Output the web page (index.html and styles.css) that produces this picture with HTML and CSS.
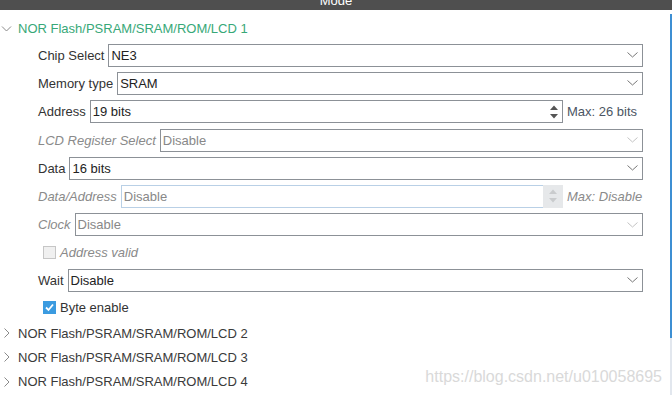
FILE: index.html
```html
<!DOCTYPE html>
<html lang="en">
<head>
  <meta charset="UTF-8">
  <meta name="viewport" content="width=device-width, initial-scale=1.0">
  <title>Mode</title>
  <link rel="stylesheet" href="styles.css">
</head>
<body>
  <header class="mode-bar"><span>Mode</span></header>

  <div class="panel">
    <div class="tree">
      <!-- expanded bank -->
      <div class="group open">
        <div class="group-head">
          <svg class="twisty down" width="12" height="8" viewBox="0 0 12 8"><path d="M1 1.5 L5.5 6 L10 1.5" fill="none" stroke="#8a8a8a" stroke-width="1"/></svg>
          <span class="group-title">NOR Flash/PSRAM/SRAM/ROM/LCD 1</span>
        </div>

        <div class="group-body">
          <div class="field">
            <label>Chip Select</label>
            <div class="box">
              <span>NE3</span>
              <svg class="caret" width="11" height="6" viewBox="0 0 11 6"><path d="M0.5 0.5 L5.5 5 L10.5 0.5" fill="none" stroke="#777" stroke-width="1"/></svg>
            </div>
          </div>

          <div class="field">
            <label>Memory type</label>
            <div class="box">
              <span>SRAM</span>
              <svg class="caret" width="11" height="6" viewBox="0 0 11 6"><path d="M0.5 0.5 L5.5 5 L10.5 0.5" fill="none" stroke="#777" stroke-width="1"/></svg>
            </div>
          </div>

          <div class="field tall">
            <label>Address</label>
            <div class="box spin">
              <span>19 bits</span>
              <div class="spin-btn">
                <svg width="10" height="16" viewBox="0 0 10 16"><path d="M1 6 L5 1.5 L9 6 Z M1 10 L5 14.5 L9 10 Z" fill="#555"/></svg>
              </div>
            </div>
            <span class="max">Max: 26 bits</span>
          </div>

          <div class="field disabled">
            <label>LCD Register Select</label>
            <div class="box">
              <span>Disable</span>
              <svg class="caret" width="11" height="6" viewBox="0 0 11 6"><path d="M0.5 0.5 L5.5 5 L10.5 0.5" fill="none" stroke="#c4c4c4" stroke-width="1"/></svg>
            </div>
          </div>

          <div class="field">
            <label>Data</label>
            <div class="box">
              <span>16 bits</span>
              <svg class="caret" width="11" height="6" viewBox="0 0 11 6"><path d="M0.5 0.5 L5.5 5 L10.5 0.5" fill="none" stroke="#777" stroke-width="1"/></svg>
            </div>
          </div>

          <div class="field disabled">
            <label>Data/Address</label>
            <div class="box spin off">
              <span>Disable</span>
              <div class="spin-btn">
                <svg width="10" height="16" viewBox="0 0 10 16"><path d="M1 6 L5 1.5 L9 6 Z M1 10 L5 14.5 L9 10 Z" fill="#c9cbcd"/></svg>
              </div>
            </div>
            <span class="max">Max: Disable</span>
          </div>

          <div class="field disabled tall">
            <label>Clock</label>
            <div class="box">
              <span>Disable</span>
              <svg class="caret" width="11" height="6" viewBox="0 0 11 6"><path d="M0.5 0.5 L5.5 5 L10.5 0.5" fill="none" stroke="#c4c4c4" stroke-width="1"/></svg>
            </div>
          </div>

          <div class="check-row disabled">
            <span class="check"></span>
            <span>Address valid</span>
          </div>

          <div class="field">
            <label>Wait</label>
            <div class="box">
              <span>Disable</span>
              <svg class="caret" width="11" height="6" viewBox="0 0 11 6"><path d="M0.5 0.5 L5.5 5 L10.5 0.5" fill="none" stroke="#777" stroke-width="1"/></svg>
            </div>
          </div>

          <div class="check-row">
            <span class="check on">
              <svg width="13" height="13" viewBox="0 0 13 13"><path d="M3 6.5 L5.5 9 L10 3.5" fill="none" stroke="#fff" stroke-width="1.8"/></svg>
            </span>
            <span>Byte enable</span>
          </div>
        </div>
      </div>

      <!-- collapsed banks -->
      <div class="group">
        <div class="group-head closed">
          <svg class="twisty" width="12" height="10" viewBox="0 0 12 10"><path d="M3.5 0.5 L8 5 L3.5 9.5" fill="none" stroke="#8a8a8a" stroke-width="1"/></svg>
          <span>NOR Flash/PSRAM/SRAM/ROM/LCD 2</span>
        </div>
      </div>
      <div class="group">
        <div class="group-head closed">
          <svg class="twisty" width="12" height="10" viewBox="0 0 12 10"><path d="M3.5 0.5 L8 5 L3.5 9.5" fill="none" stroke="#8a8a8a" stroke-width="1"/></svg>
          <span>NOR Flash/PSRAM/SRAM/ROM/LCD 3</span>
        </div>
      </div>
      <div class="group">
        <div class="group-head closed last">
          <svg class="twisty" width="12" height="10" viewBox="0 0 12 10"><path d="M3.5 0.5 L8 5 L3.5 9.5" fill="none" stroke="#8a8a8a" stroke-width="1"/></svg>
          <span>NOR Flash/PSRAM/SRAM/ROM/LCD 4</span>
        </div>
      </div>
    </div>

    <div class="scrollbar"></div>
  </div>

  <div class="watermark">https://blog.csdn.net/u010058695</div>
</body>
</html>
```

FILE: styles.css
```css
/* Mode panel, config tree */
body {
  margin: 0;
  font-family: "Liberation Sans", Arial, sans-serif;
  font-size: 13px;
  color: #333;
  background: #fff;
  overflow: hidden;
  position: relative;
}

.mode-bar {
  height: 10px;
  background: #4f4f4f;
  color: #fff;
  text-align: center;
  line-height: 2px;
  overflow: hidden;
}

.panel {
  display: flex;
  height: 385px;
}
.tree {
  flex: 1;
  padding-top: 6px;
  padding-right: 27px;
}
.scrollbar {
  width: 2px;
  margin-top: 4px;
  background: linear-gradient(#3d8fd3 0 324px, #e2e7ee 324px);
}

/* tree rows */
.group-head {
  display: flex;
  align-items: center;
  height: 25px;
  white-space: nowrap;
}
.group-head.closed {
  height: 24px;
  color: #3a3a3a;
}
.group-head.last {
  height: 25px;
}
.twisty {
  width: 12px;
  margin-left: 1px;
  margin-right: 5px;
  flex: none;
}
.group-title {
  color: #38a878;
}

/* form rows */
.field {
  display: flex;
  align-items: center;
  height: 28px;
  padding-left: 38px;
}
.field.tall {
  height: 29px;
}
.field label {
  margin-right: 4px;
  white-space: nowrap;
}
.box {
  flex: 1;
  display: flex;
  align-items: center;
  height: 23px;
  box-sizing: border-box;
  border: 1px solid #8c9197;
  padding-left: 2px;
  background: #fff;
  color: #222;
}
.caret {
  margin-left: auto;
  margin-right: 4px;
}
.field.disabled label {
  font-style: italic;
  color: #8a8a8a;
}
.field.disabled .box {
  color: #888;
}

.spin-btn {
  margin-left: auto;
  margin-right: 3px;
  display: flex;
  align-items: center;
}
.box.off {
  border-color: #b9d0e6;
  color: #a9c3df;
}
.box.off .spin-btn {
  align-self: stretch;
  margin: -1px -1px -1px auto;
  width: 20px;
  justify-content: center;
  background: #e6e8ea;
}
.max {
  width: 76px;
  margin-left: 4px;
  white-space: nowrap;
  color: #4b5563;
}
.field.disabled .max {
  font-style: italic;
  color: #8a8a8a;
}

/* checkboxes */
.check-row {
  display: flex;
  align-items: center;
  gap: 4px;
  height: 27px;
  padding-left: 43px;
}
.check {
  width: 13px;
  height: 13px;
  box-sizing: border-box;
  border: 1px solid #c6c6c6;
  background: #f0f0f0;
}
.check.on {
  border: none;
  background: #3b9be0;
}
.check.on svg {
  display: block;
}
.check-row.disabled span:last-child {
  font-style: italic;
  color: #8a8a8a;
}

.watermark {
  position: absolute;
  right: 10px;
  top: 368px;
  font-size: 16px;
  line-height: 18px;
  color: #d9d9d9;
  white-space: nowrap;
}
```
